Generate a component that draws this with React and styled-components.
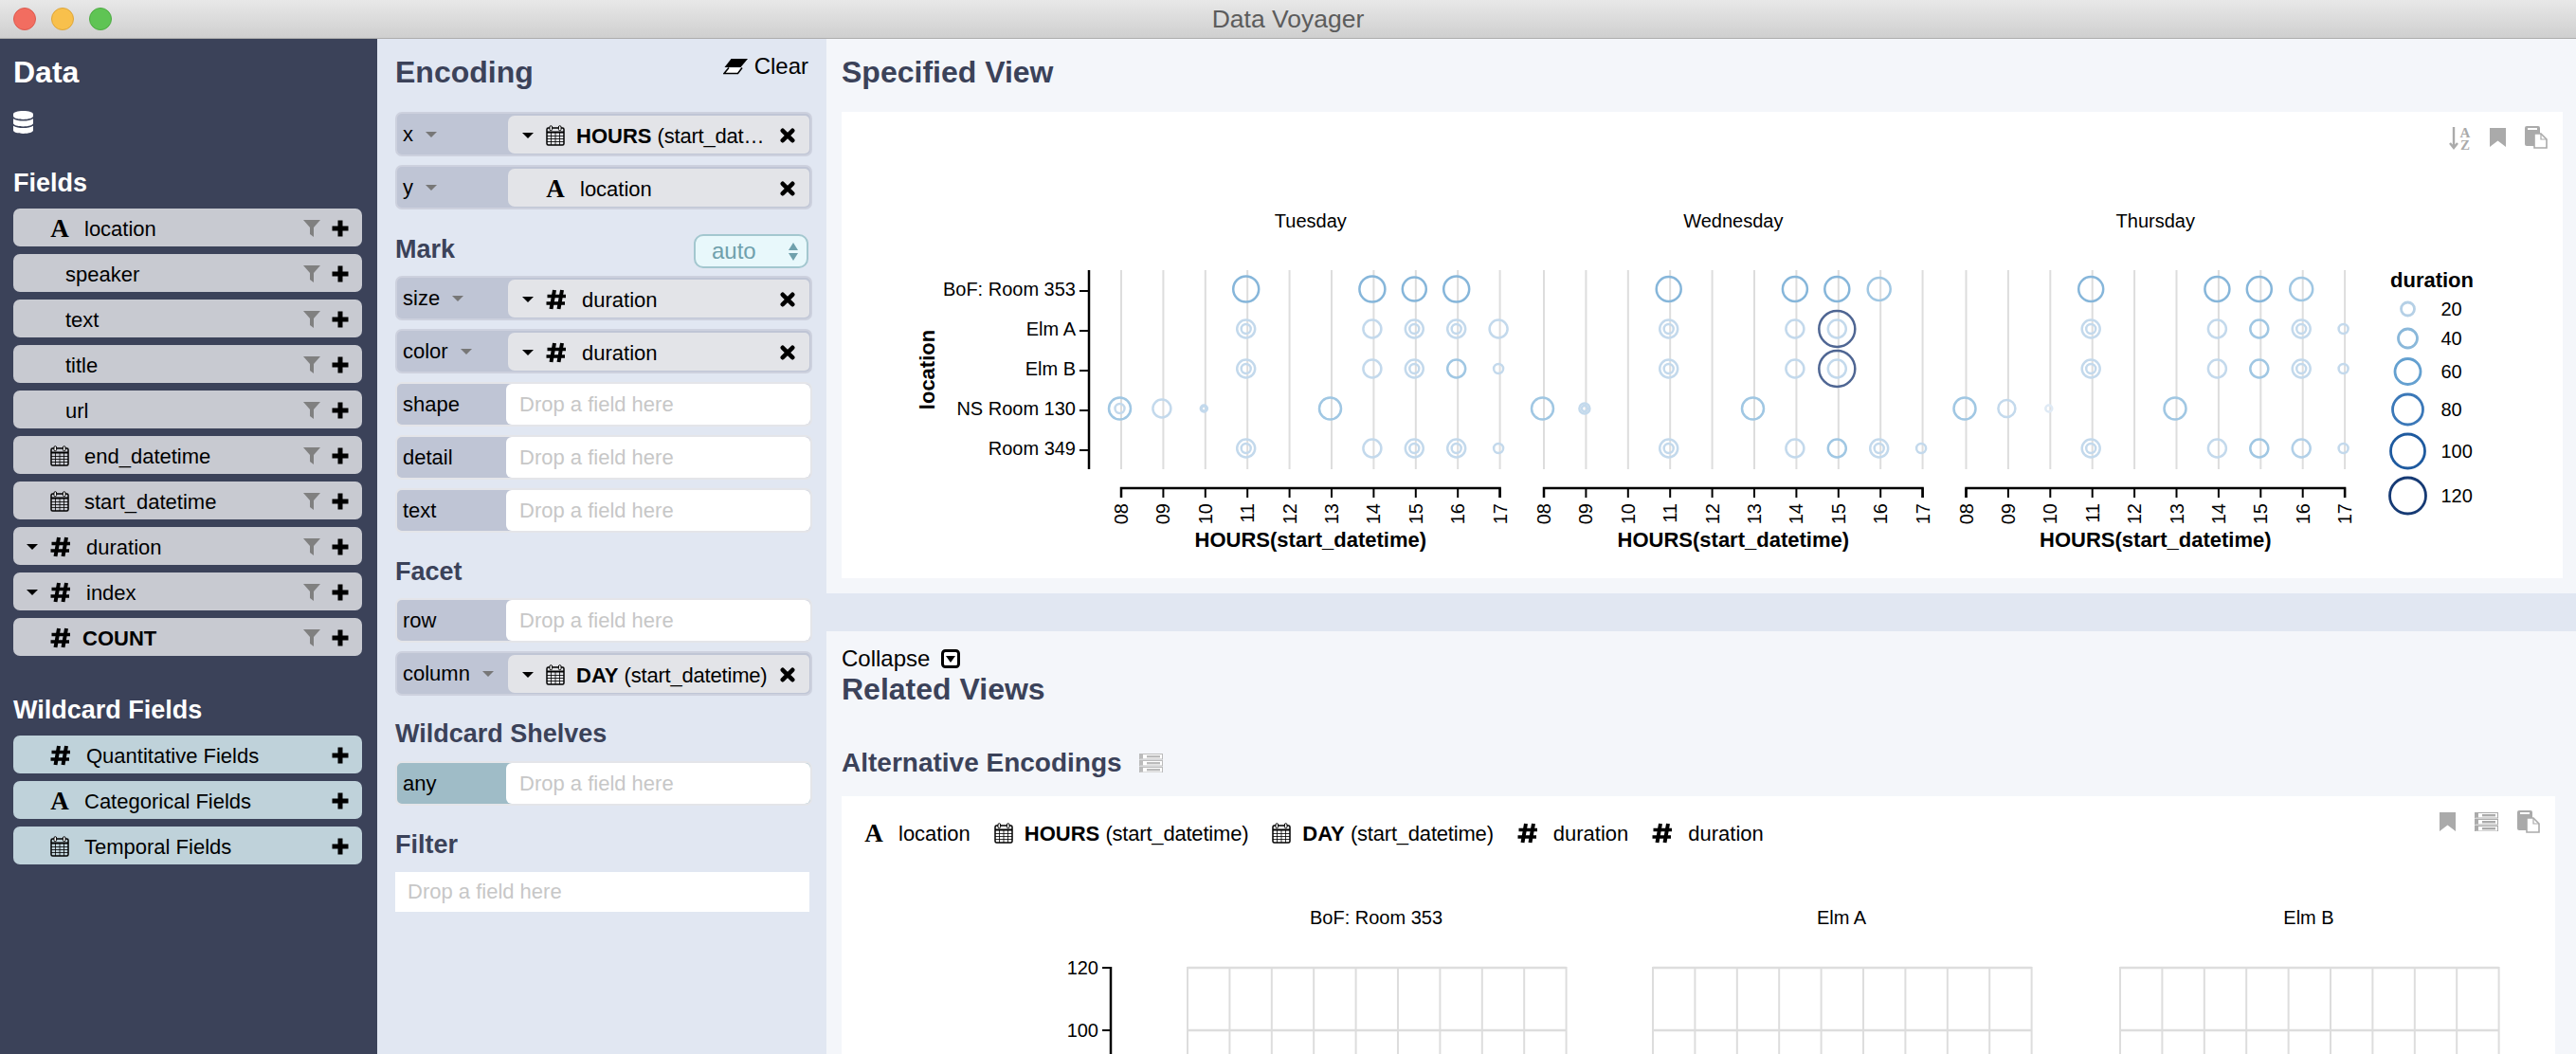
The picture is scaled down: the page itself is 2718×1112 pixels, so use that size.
import React from 'react';
import styled, { createGlobalStyle } from 'styled-components';
import { FaDatabase } from 'react-icons/fa';

const GlobalStyle = createGlobalStyle`
  html, body {
    margin: 0;
    height: 100%;
    overflow: hidden;
    background: #f4f6fa;
    font-family: "Liberation Sans", Arial, sans-serif;
    color: #000;
  }
`;

const navy = '#3b4259';

const Page = styled.div`
  width: 2718px;
  height: 1112px;
  display: flex;
  flex-direction: column;
  overflow: hidden;
`;

const TitleBar = styled.header`
  height: 40px;
  flex: none;
  display: grid;
  grid-template-columns: 1fr auto 1fr;
  align-items: center;
  padding: 0 14px;
  background: linear-gradient(#e8e8e8, #cfcfcf);
  border-bottom: 1px solid #adadad;
`;

const Lights = styled.div`
  display: flex;
  gap: 16px;
`;

const Light = styled.span`
  width: 22px;
  height: 22px;
  border-radius: 50%;
  background: ${p => p.$color};
  border: 1px solid ${p => p.$edge};
`;

const WindowTitle = styled.div`
  font-size: 26.5px;
  padding-top: 1px;
  color: #5c5c5c;
`;

const Body = styled.div`
  flex: 1;
  display: flex;
  min-height: 0;
`;

const DataPane = styled.aside`
  width: 398px;
  flex: none;
  box-sizing: border-box;
  padding: 17px 16px 0 14px;
  background: ${navy};
`;

const PaneTitle = styled.h2`
  margin: 0;
  font-size: 32px;
  line-height: 36px;
  font-weight: 700;
  color: ${p => p.$light ? '#fff' : navy};
`;

const SubTitle = styled.h3`
  margin: ${p => p.$top || 0}px 0 ${p => p.$bottom || 0}px;
  font-size: 27px;
  line-height: 32px;
  font-weight: 700;
  color: ${p => p.$light ? '#fff' : navy};
`;

const DatabaseIcon = styled(FaDatabase)`
  display: block;
  margin-top: 23px;
  width: 21px;
  height: 24px;
  color: #fff;
`;

const FieldList = styled.div`
  display: flex;
  flex-direction: column;
  gap: 8px;
`;

const FieldRow = styled.div`
  height: 40px;
  display: flex;
  align-items: center;
  box-sizing: border-box;
  padding: 2px 14px 0;
  border-radius: 7px;
  background: ${p => p.$wild ? '#bfd2da' : '#c8cad1'};
`;

const CaretSlot = styled.span`
  width: 25px;
  flex: none;
  display: flex;
  align-items: center;
`;

const Caret = styled.span`
  width: 0;
  height: 0;
  flex: none;
  border-left: 6px solid transparent;
  border-right: 6px solid transparent;
  border-top: 6px solid ${p => p.$grey ? '#777' : '#000'};
`;

const FieldText = styled.span`
  flex: 1;
  min-width: 0;
  margin-left: ${p => p.$tight ? 12 : 16}px;
  padding-top: 2px;
  font-size: 22px;
  line-height: 28px;
  font-weight: ${p => p.$bold ? 700 : 400};
  white-space: nowrap;
  overflow: hidden;
  text-overflow: ellipsis;
`;

const Strong = styled.strong`
  font-weight: 700;
`;

const FieldArg = styled.span`
  letter-spacing: -0.2px;
`;

const Actions = styled.span`
  display: flex;
  align-items: center;
  gap: 12px;
  margin-left: 8px;
`;

const IconSvg = styled.svg`
  display: block;
  flex: none;
`;

const FunnelIcon = () => (
  <IconSvg width="18" height="18" viewBox="0 0 18 18">
    <path d="M0 0H18L11 8V18L7 15V8Z" fill="#808080" />
  </IconSvg>
);

const PlusIcon = () => (
  <IconSvg width="18" height="18" viewBox="0 0 18 18">
    <path d="M9 0.5V17.5M0.5 9H17.5" fill="none" stroke="#000" strokeWidth="5" />
  </IconSvg>
);

const CloseIcon = styled(({ className }) => (
  <IconSvg className={className} width="16" height="16" viewBox="0 0 16 16">
    <path d="M2.8 2.8L13.2 13.2M13.2 2.8L2.8 13.2" fill="none" stroke="#000" strokeWidth="4.6" strokeLinecap="round" />
  </IconSvg>
))`
  margin-left: 10px;
`;

const FontGlyph = styled.span`
  width: 20px;
  flex: none;
  text-align: center;
  font-family: "Liberation Serif", serif;
  font-weight: 700;
  font-size: 27px;
  line-height: 28px;
`;

const HashIcon = () => (
  <IconSvg width="22" height="22" viewBox="0 0 22 22">
    <path d="M9 1L5.5 21M17 1L13.5 21" fill="none" stroke="#000" strokeWidth="4" />
    <path d="M1.5 7.5H21M0.5 15H20" fill="none" stroke="#000" strokeWidth="3.6" />
  </IconSvg>
);

const CalendarIcon = () => (
  <IconSvg width="20" height="22" viewBox="0 0 20 22">
    <rect x="1" y="3" width="18" height="18" rx="1.5" fill="none" stroke="#000" strokeWidth="1.5" />
    <path d="M1 7.5h18" stroke="#000" strokeWidth="2" />
    <path d="M5.5 8v13M10 8v13M14.5 8v13M1 11.5h18M1 14.5h18M1 17.5h18" stroke="#000" strokeWidth="0.8" />
    <rect x="4" y="0.7" width="2.6" height="5" rx="1.3" fill="#fff" stroke="#000" strokeWidth="1" />
    <rect x="13.4" y="0.7" width="2.6" height="5" rx="1.3" fill="#fff" stroke="#000" strokeWidth="1" />
  </IconSvg>
);

const TypeIcon = ({ type }) => {
  if (type === 'nominal') return <FontGlyph>A</FontGlyph>;
  if (type === 'quant') return <HashIcon />;
  if (type === 'time') return <CalendarIcon />;
  return null;
};

const FieldItem = ({ field, wild }) => (
  <FieldRow $wild={wild}>
    <CaretSlot>{field.caret && <Caret />}</CaretSlot>
    <TypeIcon type={field.type} />
    <FieldText $bold={field.bold} $tight={field.bold}>{field.name}</FieldText>
    <Actions>
      {!wild && <FunnelIcon />}
      <PlusIcon />
    </Actions>
  </FieldRow>
);

const EncodingPane = styled.section`
  width: 474px;
  flex: none;
  box-sizing: border-box;
  padding: 17px 15px 0 19px;
  background: #e1e7f2;
`;

const HeadRow = styled.div`
  display: flex;
  justify-content: space-between;
  align-items: flex-start;
  margin: ${p => p.$top || 0}px 0 ${p => p.$bottom}px;
`;

const ClearButton = styled.span`
  display: flex;
  align-items: center;
  gap: 7px;
  margin: -2px 4px 0 0;
  font-size: 24px;
  line-height: 28px;
`;

const MarkSelect = styled.div`
  width: 121px;
  height: 36px;
  box-sizing: border-box;
  display: flex;
  align-items: center;
  justify-content: space-between;
  margin-right: 4px;
  padding: 0 9px 0 17px;
  border: 2px solid #a3c7cf;
  border-radius: 10px;
  background: #e8f8fb;
  color: #6fa0ac;
  font-size: 24px;
`;

const Stepper = styled.span`
  display: flex;
  flex-direction: column;
  gap: 3px;
`;

const StepperArrow = styled.span`
  width: 0;
  height: 0;
  border-left: 5px solid transparent;
  border-right: 5px solid transparent;
  ${p => p.$up ? 'border-bottom' : 'border-top'}: 8px solid #6fa0ac;
`;

const ShelfList = styled.div`
  display: flex;
  flex-direction: column;
  gap: 9px;
`;

const Shelf = styled.div`
  height: 47px;
  width: 440px;
  box-sizing: border-box;
  display: flex;
  border: 2px solid ${p => p.$filled ? '#cdd1de' : '#e4e5e9'};
  border-radius: 7px;
  background: ${p => p.$wild ? '#9fbcc7' : '#bfc5d5'};
`;

const ShelfName = styled.div`
  width: 117px;
  flex: none;
  box-sizing: border-box;
  display: flex;
  align-items: center;
  gap: 13px;
  padding: 1px 0 0 6px;
  font-size: 22px;
`;

const ShelfField = styled.div`
  flex: 1;
  min-width: 0;
  display: flex;
  align-items: center;
  margin: 2px 1px 1px 0;
  padding: 2px 15px 0;
  border-radius: 7px 5px 5px 7px;
  background: #e3e4e8;
`;

const DropZone = styled.div`
  flex: 1;
  display: flex;
  align-items: center;
  margin-left: -2px;
  padding: 1px 0 0 14px;
  border-radius: 6px;
  background: #fff;
  color: #c7c7c7;
  font-size: 22px;
`;

const FilterZone = styled.div`
  width: 437px;
  height: 42px;
  box-sizing: border-box;
  display: flex;
  align-items: center;
  padding-left: 13px;
  background: #fff;
  color: #c7c7c7;
  font-size: 22px;
`;

const FieldTitle = ({ field }) => field.fn
  ? <FieldText $tight><Strong>{field.fn}</Strong> <FieldArg>({field.name})</FieldArg></FieldText>
  : <FieldText>{field.name}</FieldText>;

const EncodingShelf = ({ name, field, wild }) => (
  <Shelf $filled={!!field} $wild={wild}>
    <ShelfName>
      {name}
      {field && <Caret $grey />}
    </ShelfName>
    {field ? (
      <ShelfField>
        <CaretSlot>{field.caret && <Caret />}</CaretSlot>
        <TypeIcon type={field.type} />
        <FieldTitle field={field} />
        <CloseIcon />
      </ShelfField>
    ) : <DropZone>Drop a field here</DropZone>}
  </Shelf>
);

const MainPane = styled.main`
  flex: 1;
  min-width: 0;
  display: flex;
  flex-direction: column;
`;

const SpecifiedPane = styled.section`
  height: 585px;
  flex: none;
  box-sizing: border-box;
  padding: 17px 14px 0 16px;
  background: #f4f6fa;
`;

const Card = styled.div`
  position: relative;
  background: #fff;
  margin-top: ${p => p.$top}px;
  height: ${p => p.$height}px;
  overflow: hidden;
`;

const CardTools = styled.div`
  position: absolute;
  top: 15px;
  right: 16px;
  display: flex;
  align-items: flex-start;
  gap: 20px;
`;

const ToolSlot = styled.span`
  margin-top: 2px;
`;

const BookmarkIcon = () => (
  <ToolSlot>
    <IconSvg width="17" height="20" viewBox="0 0 17 20">
      <path d="M0 0H17V20L8.5 13.5L0 20Z" fill="#aaa" />
    </IconSvg>
  </ToolSlot>
);

const SortIcon = () => (
  <IconSvg width="23" height="30" viewBox="0 0 23 30">
    <path d="M5 1v21M1 18l4 5 4-5" fill="none" stroke="#aaa" strokeWidth="2.4" />
    <text x="17" y="11.5" textAnchor="middle" fontFamily="Liberation Serif" fontWeight="700" fontSize="15" fill="#aaa">A</text>
    <text x="17" y="24.5" textAnchor="middle" fontFamily="Liberation Serif" fontWeight="700" fontSize="15" fill="#aaa">Z</text>
  </IconSvg>
);

const PasteIcon = () => (
  <IconSvg width="24" height="24" viewBox="0 0 24 24">
    <rect x="0" y="0" width="16" height="21" rx="2" fill="#aaa" />
    <rect x="3" y="2" width="10" height="2" fill="#fff" />
    <path d="M10 8h7l6 6v9H10z" fill="#fff" stroke="#aaa" strokeWidth="1.6" />
    <path d="M17 8v6h6" fill="none" stroke="#aaa" strokeWidth="1.2" />
  </IconSvg>
);

const ServerIcon = ({ shade = '#aaa' }) => (
  <IconSvg width="25" height="20" viewBox="0 0 25 20">
    {[0, 7, 14].map(y => (
      <g key={y}>
        <rect x="0.5" y={y + 0.5} width="24" height="5.5" fill="#fff" stroke={shade} />
        <rect x="1" y={y + 1} width="3" height="4.5" fill={shade} />
        <rect x="8" y={y + 2} width="14" height="2.4" fill={shade} />
      </g>
    ))}
  </IconSvg>
);

const CollapseIcon = () => (
  <IconSvg width="20" height="20" viewBox="0 0 20 20">
    <rect x="1.5" y="1.5" width="17" height="17" rx="3" fill="#fff" stroke="#000" strokeWidth="3" />
    <path d="M5 7H15L10 14Z" fill="#000" />
  </IconSvg>
);

const EraserIcon = () => (
  <IconSvg width="26" height="18" viewBox="0 0 26 18">
    <path d="M8.5 1H26L18.5 10H1.5z" fill="#000" />
    <path d="M6 10.5L1 16.5H15.5L20 10.5" fill="#fff" stroke="#000" strokeWidth="1.6" />
  </IconSvg>
);

const CollapseRow = styled.div`
  display: flex;
  align-items: center;
  gap: 12px;
  font-size: 24px;
  line-height: 28px;
`;

const Divider = styled.div`
  height: 40px;
  flex: none;
  background: #e1e7f2;
`;

const RelatedPane = styled.section`
  flex: 1;
  min-height: 0;
  box-sizing: border-box;
  padding: 15px 22px 0 16px;
  background: #f4f6fa;
`;

const GroupTitle = styled.h3`
  display: flex;
  align-items: center;
  gap: 18px;
  margin: 44px 0 0;
  font-size: 28px;
  line-height: 32px;
  font-weight: 700;
  color: ${navy};
`;

const ChipRow = styled.div`
  display: flex;
  align-items: center;
  gap: 25px;
  height: 30px;
  padding: 24px 0 0 24px;
`;

const Chip = styled.div`
  display: flex;
  align-items: center;
`;

const ChartSvg = styled.svg`
  display: block;
`;

const Tick = styled.text`
  font-family: "Liberation Sans", Arial, sans-serif;
  font-size: 20px;
  fill: #000;
`;

const AxisTitle = styled.text`
  font-family: "Liberation Sans", Arial, sans-serif;
  font-size: 22px;
  font-weight: 700;
  fill: #000;
`;

const fields = [
  { name: 'location', type: 'nominal' },
  { name: 'speaker' },
  { name: 'text' },
  { name: 'title' },
  { name: 'url' },
  { name: 'end_datetime', type: 'time' },
  { name: 'start_datetime', type: 'time' },
  { name: 'duration', type: 'quant', caret: true },
  { name: 'index', type: 'quant', caret: true },
  { name: 'COUNT', type: 'quant', bold: true },
];

const wildcards = [
  { name: 'Quantitative Fields', type: 'quant' },
  { name: 'Categorical Fields', type: 'nominal' },
  { name: 'Temporal Fields', type: 'time' },
];

const hoursField = { fn: 'HOURS', name: 'start_datetime', type: 'time', caret: true };
const dayField = { fn: 'DAY', name: 'start_datetime', type: 'time', caret: true };
const locationField = { name: 'location', type: 'nominal' };
const durationField = { name: 'duration', type: 'quant', caret: true };

const chips = [locationField, hoursField, dayField, durationField, durationField];

const hours = ['08', '09', '10', '11', '12', '13', '14', '15', '16', '17'];
const rooms = ['BoF: Room 353', 'Elm A', 'Elm B', 'NS Room 130', 'Room 349'];
const STEP = 44.4;
const rowY = [305, 347, 389, 431, 473];

const shade = r => {
  if (r >= 19) return '#4f6693';
  if (r >= 12.5) return '#86b6da';
  if (r >= 11) return '#a0c7e3';
  return '#c3d9ec';
};

// [hour index, row, radius, optional colour]
const pair = (h, row) => [[h, row, 9.5], [h, row, 5]];

const tuesday = [
  [3, 0, 13.5], [6, 0, 13.5], [7, 0, 12.5], [8, 0, 13.5],
  ...pair(3, 1), [6, 1, 9.5], ...pair(7, 1), ...pair(8, 1), [9, 1, 9.5],
  ...pair(3, 2), [6, 2, 9.5], ...pair(7, 2), [8, 2, 9.5, '#a0c7e3'], [9, 2, 5],
  [0, 3, 11.5], [0, 3, 5], [1, 3, 9.5], [2, 3, 3.5], [2, 3, 2.5], [5, 3, 11.5],
  ...pair(3, 4), [6, 4, 9.5], ...pair(7, 4), ...pair(8, 4), [9, 4, 5],
];

const wednesday = [
  [3, 0, 13], [6, 0, 13], [7, 0, 13], [8, 0, 12],
  ...pair(3, 1), [6, 1, 9.5], [7, 1, 19], [7, 1, 9.5],
  ...pair(3, 2), [6, 2, 9.5], [7, 2, 19], [7, 2, 9.5],
  [0, 3, 11.5], [1, 3, 5.5], [1, 3, 3], [5, 3, 11.5],
  ...pair(3, 4), [6, 4, 9.5], [7, 4, 9.5, '#a0c7e3'], ...pair(8, 4), [9, 4, 5],
];

const thursday = [
  [3, 0, 13], [6, 0, 13], [7, 0, 13], [8, 0, 12],
  ...pair(3, 1), [6, 1, 9.5], [7, 1, 9.5, '#a0c7e3'], ...pair(8, 1), [9, 1, 5],
  ...pair(3, 2), [6, 2, 9.5], [7, 2, 9.5, '#a0c7e3'], ...pair(8, 2), [9, 2, 5],
  [0, 3, 11.5], [1, 3, 9], [2, 3, 3.5, '#dfeaf5'], [5, 3, 11.5],
  ...pair(3, 4), [6, 4, 9.5], [7, 4, 9.5, '#a0c7e3'], [8, 4, 9.5, '#b2d0e8'], [9, 4, 5],
];

const facets = [
  { title: 'Tuesday', x0: 1183, marks: tuesday },
  { title: 'Wednesday', x0: 1629, marks: wednesday },
  { title: 'Thursday', x0: 2074.5, marks: thursday },
];

const legend = [
  { label: '20', y: 326, r: 7, color: '#b5d0e6' },
  { label: '40', y: 357, r: 10, color: '#8ab8da' },
  { label: '60', y: 392, r: 13.5, color: '#64a0d0' },
  { label: '80', y: 432, r: 16, color: '#3b78b8' },
  { label: '100', y: 476, r: 18, color: '#1e5a9f' },
  { label: '120', y: 523, r: 19, color: '#163a74' },
];

const Facet = ({ title, x0, marks }) => {
  const xs = hours.map((_, i) => x0 + i * STEP);
  const mid = x0 + 9 * STEP / 2;
  return (
    <g>
      <Tick x={mid} y="240" textAnchor="middle">{title}</Tick>
      {xs.map(x => <line key={x} x1={x} x2={x} y1="285" y2="495" stroke="#ddd" strokeWidth="2" />)}
      {marks.map(([h, row, r, color], i) => (
        <circle key={i} cx={xs[h] - 1.5} cy={rowY[row]} r={r} fill="none" stroke={color || shade(r)} strokeWidth="2.5" />
      ))}
      <path d={`M${x0} 525V515H${x0 + 9 * STEP}V525`} fill="none" stroke="#000" strokeWidth="2.5" />
      {xs.map((x, i) => (
        <g key={x}>
          <line x1={x} x2={x} y1="515" y2="525" stroke="#000" strokeWidth="2" />
          <Tick transform={`translate(${x + 7} 531) rotate(-90)`} textAnchor="end">{hours[i]}</Tick>
        </g>
      ))}
      <AxisTitle x={mid} y="577" textAnchor="middle">HOURS(start_datetime)</AxisTitle>
    </g>
  );
};

const SpecifiedChart = () => (
  <ChartSvg width="1816" height="492" viewBox="888 118 1816 492">
    <AxisTitle transform="translate(986 390) rotate(-90)" textAnchor="middle">location</AxisTitle>
    <line x1="1149" x2="1149" y1="285" y2="495" stroke="#000" strokeWidth="2.5" />
    {rooms.map((room, i) => (
      <g key={room}>
        <line x1="1139" x2="1149" y1={rowY[i] + 2} y2={rowY[i] + 2} stroke="#000" strokeWidth="2" />
        <Tick x="1135" y={rowY[i] + 7} textAnchor="end">{room}</Tick>
      </g>
    ))}
    {facets.map(f => <Facet key={f.title} {...f} />)}
    <AxisTitle x="2522" y="303">duration</AxisTitle>
    {legend.map(l => (
      <g key={l.label}>
        <circle cx="2540.5" cy={l.y} r={l.r} fill="none" stroke={l.color} strokeWidth="2.8" />
        <Tick x="2575.5" y={l.y + 7}>{l.label}</Tick>
      </g>
    ))}
  </ChartSvg>
);

const lowerPanels = [
  { title: 'BoF: Room 353', x0: 1253 },
  { title: 'Elm A', x0: 1744 },
  { title: 'Elm B', x0: 2237 },
];

const AlternativeChart = () => (
  <ChartSvg width="1808" height="218" viewBox="888 894 1808 218">
    <line x1="1172" x2="1172" y1="1020" y2="1112" stroke="#000" strokeWidth="2.5" />
    {[[1021, '120'], [1087, '100']].map(([y, label]) => (
      <g key={label}>
        <line x1="1163" x2="1172" y1={y} y2={y} stroke="#000" strokeWidth="2" />
        <Tick x="1159" y={y + 7} textAnchor="end">{label}</Tick>
      </g>
    ))}
    {lowerPanels.map(({ title, x0 }) => (
      <g key={title}>
        <Tick x={x0 + 199} y="975" textAnchor="middle">{title}</Tick>
        {hours.map((_, i) => (
          <line key={i} x1={x0 + i * STEP} x2={x0 + i * STEP} y1="1020" y2="1112" stroke="#ddd" strokeWidth="2" />
        ))}
        {[1021, 1087].map(y => <line key={y} x1={x0} x2={x0 + 9 * STEP} y1={y} y2={y} stroke="#ddd" strokeWidth="2.5" />)}
      </g>
    ))}
  </ChartSvg>
);

export default function App() {
  return (
    <Page>
      <GlobalStyle />
      <TitleBar>
        <Lights>
          <Light $color="#f26d60" $edge="#dc5a4f" />
          <Light $color="#f8c04c" $edge="#dea63a" />
          <Light $color="#5fc454" $edge="#4eab43" />
        </Lights>
        <WindowTitle>Data Voyager</WindowTitle>
        <span />
      </TitleBar>
      <Body>
        <DataPane>
          <PaneTitle $light>Data</PaneTitle>
          <DatabaseIcon />
          <SubTitle $light $top={36} $bottom={11}>Fields</SubTitle>
          <FieldList>
            {fields.map(f => <FieldItem key={f.name} field={f} />)}
          </FieldList>
          <SubTitle $light $top={41} $bottom={11}>Wildcard Fields</SubTitle>
          <FieldList>
            {wildcards.map(f => <FieldItem key={f.name} field={f} wild />)}
          </FieldList>
        </DataPane>

        <EncodingPane>
          <HeadRow $bottom={24}>
            <PaneTitle>Encoding</PaneTitle>
            <ClearButton><EraserIcon />Clear</ClearButton>
          </HeadRow>
          <ShelfList>
            <EncodingShelf name="x" field={hoursField} />
            <EncodingShelf name="y" field={locationField} />
          </ShelfList>
          <HeadRow $top={26} $bottom={8}>
            <SubTitle>Mark</SubTitle>
            <MarkSelect>
              auto
              <Stepper><StepperArrow $up /><StepperArrow /></Stepper>
            </MarkSelect>
          </HeadRow>
          <ShelfList>
            <EncodingShelf name="size" field={durationField} />
            <EncodingShelf name="color" field={durationField} />
            <EncodingShelf name="shape" />
            <EncodingShelf name="detail" />
            <EncodingShelf name="text" />
          </ShelfList>
          <SubTitle $top={25} $bottom={12}>Facet</SubTitle>
          <ShelfList>
            <EncodingShelf name="row" />
            <EncodingShelf name="column" field={dayField} />
          </ShelfList>
          <SubTitle $top={24} $bottom={13}>Wildcard Shelves</SubTitle>
          <EncodingShelf name="any" wild />
          <SubTitle $top={25} $bottom={13}>Filter</SubTitle>
          <FilterZone>Drop a field here</FilterZone>
        </EncodingPane>

        <MainPane>
          <SpecifiedPane>
            <PaneTitle>Specified View</PaneTitle>
            <Card $top={24} $height={492}>
              <SpecifiedChart />
              <CardTools>
                <SortIcon />
                <BookmarkIcon />
                <PasteIcon />
              </CardTools>
            </Card>
          </SpecifiedPane>
          <Divider />
          <RelatedPane>
            <CollapseRow>Collapse <CollapseIcon /></CollapseRow>
            <PaneTitle>Related Views</PaneTitle>
            <GroupTitle>Alternative Encodings <ServerIcon shade="#bbb" /></GroupTitle>
            <Card $top={19} $height={400}>
              <ChipRow>
                {chips.map((c, i) => (
                  <Chip key={i}>
                    <TypeIcon type={c.type} />
                    <FieldTitle field={c} />
                  </Chip>
                ))}
              </ChipRow>
              <AlternativeChart />
              <CardTools>
                <BookmarkIcon />
                <ToolSlot><ServerIcon /></ToolSlot>
                <PasteIcon />
              </CardTools>
            </Card>
          </RelatedPane>
        </MainPane>
      </Body>
    </Page>
  );
}
